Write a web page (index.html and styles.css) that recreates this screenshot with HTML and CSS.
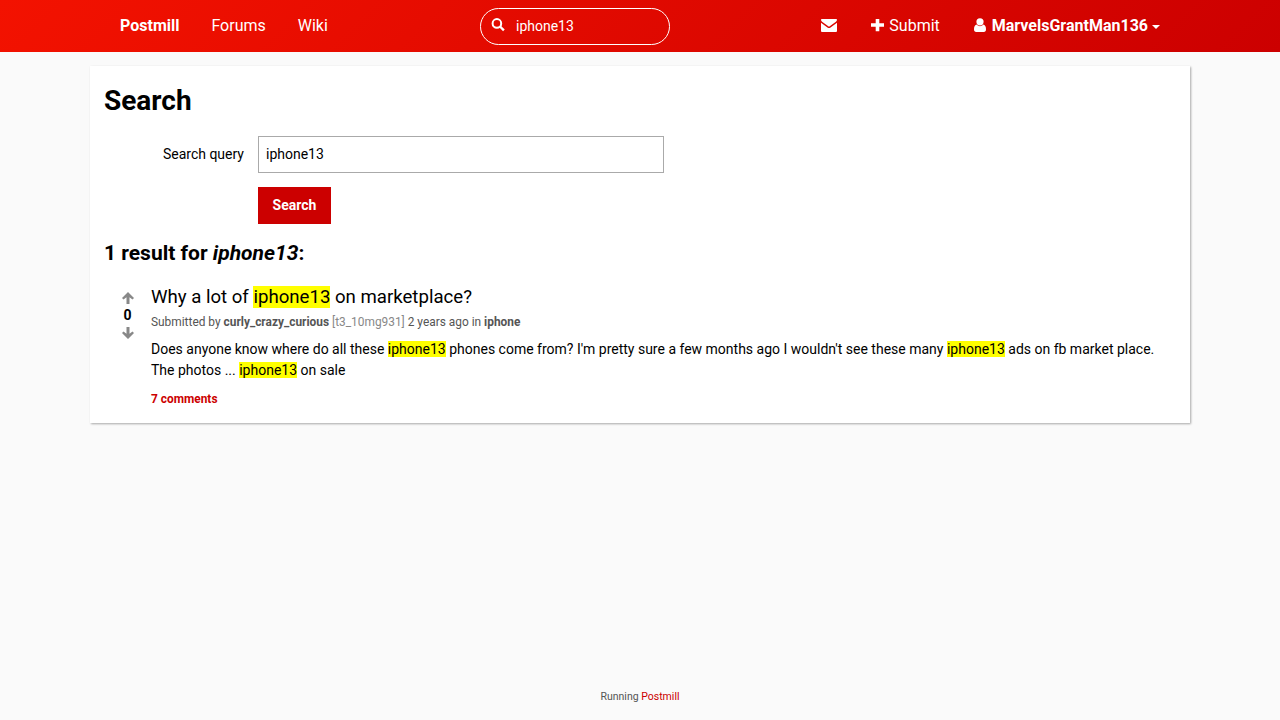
FILE: index.html
```html
<!DOCTYPE html>
<html lang="en">
<head>
<meta charset="utf-8">
<title>Search</title>
<link rel="stylesheet" href="styles.css">
</head>
<body>
<header class="site-nav">
  <div class="site-nav__inner">
    <nav class="site-nav__links">
      <a class="site-nav__brand">Postmill</a>
      <a>Forums</a>
      <a>Wiki</a>
    </nav>
    <label class="site-search">
      <svg class="site-search__icon" width="14" height="14" viewBox="0 0 14 14"><circle cx="5.9" cy="5.4" r="4.3" fill="none" stroke="currentColor" stroke-width="2"/><path d="M9 8.5L12.9 12.3" stroke="currentColor" stroke-width="2.4"/></svg>
      <input class="site-search__input" type="text" value="iphone13">
    </label>
    <nav class="site-nav__user">
      <a class="nav-mail"><svg width="16" height="13" viewBox="0 0 16 13"><path fill="currentColor" d="M.8 0H15.2Q16 0 16 .8Q16 2 14.6 3L8 7.8L1.4 3Q0 2 0 .8Q0 0 .8 0zM0 3.8L6.8 8.7Q8 9.5 9.2 8.7L16 3.8V12Q16 13 15 13H1Q0 13 0 12z"/></svg></a>
      <a class="nav-submit"><svg width="13" height="13" viewBox="0 0 13 13"><path fill="currentColor" d="M4.7 0H8.3V4.3H13V7.8H8.3V12.2H4.7V7.8H0V4.3H4.7z"/></svg>Submit</a>
      <a class="nav-account"><svg width="12" height="14" viewBox="0 0 12 14"><circle cx="6" cy="3.8" r="3.6" fill="currentColor"/><path fill="currentColor" d="M2.4 6.5Q6 10 9.6 6.5Q12 7.4 12 11.3Q12 14 9.8 14H2.2Q0 14 0 11.3Q0 7.4 2.4 6.5z"/></svg><b>MarvelsGrantMan136</b><span class="caret"></span></a>
    </nav>
  </div>
</header>
<main class="panel">
  <h1>Search</h1>
  <form class="search-form">
    <label class="search-form__label" for="q">Search query</label>
    <input class="search-form__input" id="q" type="text" value="iphone13">
    <button class="search-form__button" type="button">Search</button>
  </form>
  <h2>1 result for <em>iphone13</em>:</h2>
  <article class="submission">
    <div class="vote">
      <svg width="12" height="12" viewBox="0 0 12 12"><path fill="currentColor" d="M6 0L12 6L10.5 7.6L7.5 5.2V12H4.5V5.2L1.5 7.6L0 6z"/></svg>
      <b>0</b>
      <svg width="12" height="12" viewBox="0 0 12 12"><path fill="currentColor" d="M6 12L12 6L10.5 4.4L7.5 6.8V0H4.5V6.8L1.5 4.4L0 6z"/></svg>
    </div>
    <div class="submission__content">
      <h3>Why a lot of <mark>iphone13</mark> on marketplace?</h3>
      <p class="submission__info">Submitted by <b>curly_crazy_curious</b> <span class="submission__id">[t3_10mg931]</span> 2 years ago in <b>iphone</b></p>
      <p class="submission__body">Does anyone know where do all these <mark>iphone13</mark> phones come from? I'm pretty sure a few months ago I wouldn't see these many <mark>iphone13</mark> ads on fb market place. The photos ... <mark>iphone13</mark> on sale</p>
      <a class="submission__comments">7 comments</a>
    </div>
  </article>
</main>
<footer class="site-footer">Running <a>Postmill</a></footer>
</body>
</html>
```

FILE: styles.css
```css
* { box-sizing: border-box; }
body { margin: 0; min-height: 720px; display: flex; flex-direction: column; background: #fafafa; color: #000; font: 14px/21px Roboto, sans-serif; -webkit-font-smoothing: antialiased; }
h1, h2, h3, p { margin: 0; }
svg { display: block; flex: none; }
mark { background: #ff0; color: #000; }
.site-nav { height: 52px; background: linear-gradient(135deg, #f31200 0%, #c00 100%); color: #fff; font-size: 16px; }
.site-nav__inner { display: flex; align-items: center; width: 1040px; height: 52px; margin: 0 auto; }
.site-nav__links { display: flex; gap: 32px; width: 360px; padding-bottom: 2px; }
.site-nav__brand { font-weight: 700; }
.site-search { display: flex; align-items: center; width: 190px; height: 37px; margin-top: 1px; padding: 0 11px 0 10px; border: 1px solid #fff; border-radius: 19px; }
.site-search__icon { margin-top: -3px; }
.site-search__input { width: 140px; margin-left: 11px; padding: 0; border: 0; outline: 0; background: transparent; color: #fff; font: 14px/21px Roboto, sans-serif; }
.site-nav__user { display: flex; align-items: center; margin-left: auto; padding-bottom: 2px; }
.nav-mail { padding-top: 1px; }
.nav-submit, .nav-account { display: flex; align-items: center; }
.nav-submit { gap: 5.5px; margin: 0 34px 0 33.5px; }
.nav-account { gap: 5px; }
.nav-account b { margin-left: 1px; margin-right: -1px; }
.caret { border: 4px solid transparent; border-top-color: #fff; border-bottom: 0; margin-top: 3px; }
.panel { width: 1100px; height: 357px; margin: 14px auto 0; padding: 14px; background: #fff; box-shadow: 1px 1px 2px rgba(0, 0, 0, .33); }
h1 { font-size: 28px; line-height: 42px; }
.search-form { display: grid; grid-template-columns: 140px 406px; column-gap: 14px; row-gap: 14px; align-items: center; margin-top: 14px; }
.search-form__label { text-align: right; }
.search-form__input { height: 37px; padding: 0 7px 1px; border: 1px solid #aaa; border-radius: 0; outline: 0; font: 14px/21px Roboto, sans-serif; }
.search-form__button { grid-column: 2; justify-self: start; width: 73px; height: 37px; padding: 0 0 2px; border: 0; background: #c00; color: #fff; font: bold 14px Roboto, sans-serif; }
h2 { margin-top: 14px; font-size: 21px; line-height: 31px; }
.submission { display: flex; margin-top: 14px; }
.vote { display: flex; flex-direction: column; align-items: center; width: 47px; padding-top: 9px; color: #888; }
.vote b { color: #000; line-height: 23px; }
.submission__content { flex: 1; }
h3 { font-size: 18.62px; font-weight: 400; line-height: 28px; }
.submission__info { margin-top: 2px; color: #555; font-size: 11.9px; line-height: 18px; }
.submission__id { color: #888; }
.submission__body { margin-top: 8px; }
.submission__comments { display: block; margin-top: 9px; color: #c00; font-size: 11.9px; font-weight: 700; line-height: 18px; }
.site-footer { margin-top: auto; padding-bottom: 15px; color: #555; font-size: 10.5px; line-height: 16px; text-align: center; }
.site-footer a { color: #c00; }
```
